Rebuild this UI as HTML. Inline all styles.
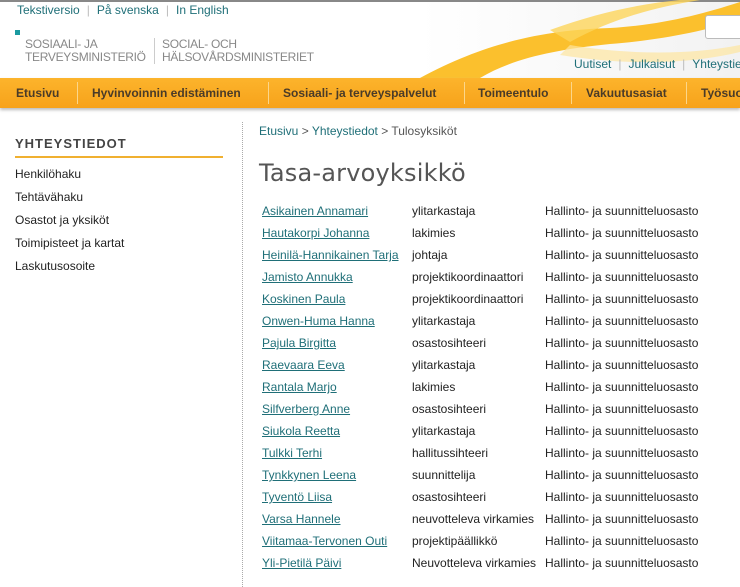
<!DOCTYPE html>
<html><head><meta charset="utf-8"><style>
body{margin:0;width:740px;height:587px;overflow:hidden;background:#fff;font-family:"Liberation Sans",Arial,sans-serif;position:relative}
.a{position:absolute;white-space:nowrap}
.top a{color:#1f6f78;text-decoration:none}
.sep{color:#bbb;margin:0 7px}
.nav{position:absolute;left:0;top:78px;width:740px;height:30px;background:linear-gradient(#fcb42c,#f7a21a);box-shadow:0 2px 3px #bbb}
.nav span{position:absolute;top:8px;font-weight:bold;font-size:12px;color:#4a3b28}
.nav i{position:absolute;top:4px;width:1px;height:22px;background:#fcd68a}
.side{font-size:12px;color:#222}
.r{font-size:12px;position:absolute;white-space:nowrap}
.n{left:262px;color:#1f6f78;text-decoration:underline}
.t{left:412px;color:#222}
.o{left:545px;color:#222}
</style></head><body>
<div class="a" style="left:0;top:0;width:740px;height:2px;background:#888"></div>
<div class="a" style="left:420px;top:2px;width:320px;height:76px;background:linear-gradient(90deg,#fff,#f2f2f2)"></div>
<svg class="a" style="left:400px;top:0" width="340" height="78" viewBox="0 0 340 78">
<path d="M20 78 C90 40 150 30 210 28 C260 25 300 15 340 2 L340 20 C300 32 260 40 210 44 C150 50 110 60 80 78Z" fill="#fbc02d"/>
<path d="M150 30 C200 12 240 4 280 0 L300 0 C250 8 210 20 170 42Z" fill="#fcd45a" opacity=".8"/>
<path d="M170 45 C230 55 290 55 340 45 L340 52 C290 64 230 66 160 55Z" fill="#fde6a0" opacity=".7"/>
</svg>
<div class="a" style="left:705px;top:15px;width:40px;height:22px;border:1px solid #bbb;border-radius:3px;background:#fff"></div>
<div class="a top" style="left:17px;top:3px;font-size:12px"><a>Tekstiversio</a><span class="sep">|</span><a>På svenska</a><span class="sep">|</span><a>In English</a></div>
<div class="a" style="left:15px;top:30px;width:5px;height:5px;background:#1a9aa0"></div>
<div class="a" style="left:25px;top:38px;font-size:12px;color:#888;line-height:13px;letter-spacing:-.3px">SOSIAALI- JA<br>TERVEYSMINISTERIÖ</div>
<div class="a" style="left:154px;top:38px;width:1px;height:26px;background:#ccc"></div>
<div class="a" style="left:162px;top:38px;font-size:12px;color:#888;line-height:13px;letter-spacing:-.3px">SOCIAL- OCH<br>HÄLSOVÅRDSMINISTERIET</div>
<div class="a top" style="left:574px;top:57px;font-size:12px"><a>Uutiset</a><span class="sep">|</span><a>Julkaisut</a><span class="sep">|</span><a>Yhteystiedot</a></div>
<div class="nav">
<span style="left:16px">Etusivu</span><i style="left:77px"></i>
<span style="left:92px">Hyvinvoinnin edistäminen</span><i style="left:268px"></i>
<span style="left:283px">Sosiaali- ja terveyspalvelut</span><i style="left:464px"></i>
<span style="left:478px">Toimeentulo</span><i style="left:571px"></i>
<span style="left:586px">Vakuutusasiat</span><i style="left:686px"></i>
<span style="left:701px">Työsuojelu</span>
</div>
<div class="a" style="left:15px;top:136px;font-size:13px;font-weight:bold;color:#444;letter-spacing:1px">YHTEYSTIEDOT</div>
<div class="a" style="left:15px;top:156px;width:208px;height:2px;background:#f0b030"></div>
<div class="a side" style="left:15px;top:167px">Henkilöhaku</div>
<div class="a side" style="left:15px;top:190px">Tehtävähaku</div>
<div class="a side" style="left:15px;top:213px">Osastot ja yksiköt</div>
<div class="a side" style="left:15px;top:236px">Toimipisteet ja kartat</div>
<div class="a side" style="left:15px;top:259px">Laskutusosoite</div>
<div class="a" style="left:242px;top:122px;height:465px;border-left:1px dotted #aaa"></div>
<div class="a" style="left:259px;top:124px;font-size:12px;color:#555"><span style="color:#1f6f78">Etusivu</span> &gt; <span style="color:#1f6f78">Yhteystiedot</span> &gt; Tulosyksiköt</div>
<div class="a" style="left:259px;top:159px;font-size:24px;color:#555;font-family:'DejaVu Sans',sans-serif;letter-spacing:.2px">Tasa-arvoyksikkö</div>
<div class="r n" style="top:204px">Asikainen Annamari</div><div class="r t" style="top:204px">ylitarkastaja</div><div class="r o" style="top:204px">Hallinto- ja suunnitteluosasto</div>
<div class="r n" style="top:226px">Hautakorpi Johanna</div><div class="r t" style="top:226px">lakimies</div><div class="r o" style="top:226px">Hallinto- ja suunnitteluosasto</div>
<div class="r n" style="top:248px">Heinilä-Hannikainen Tarja</div><div class="r t" style="top:248px">johtaja</div><div class="r o" style="top:248px">Hallinto- ja suunnitteluosasto</div>
<div class="r n" style="top:270px">Jamisto Annukka</div><div class="r t" style="top:270px">projektikoordinaattori</div><div class="r o" style="top:270px">Hallinto- ja suunnitteluosasto</div>
<div class="r n" style="top:292px">Koskinen Paula</div><div class="r t" style="top:292px">projektikoordinaattori</div><div class="r o" style="top:292px">Hallinto- ja suunnitteluosasto</div>
<div class="r n" style="top:314px">Onwen-Huma Hanna</div><div class="r t" style="top:314px">ylitarkastaja</div><div class="r o" style="top:314px">Hallinto- ja suunnitteluosasto</div>
<div class="r n" style="top:336px">Pajula Birgitta</div><div class="r t" style="top:336px">osastosihteeri</div><div class="r o" style="top:336px">Hallinto- ja suunnitteluosasto</div>
<div class="r n" style="top:358px">Raevaara Eeva</div><div class="r t" style="top:358px">ylitarkastaja</div><div class="r o" style="top:358px">Hallinto- ja suunnitteluosasto</div>
<div class="r n" style="top:380px">Rantala Marjo</div><div class="r t" style="top:380px">lakimies</div><div class="r o" style="top:380px">Hallinto- ja suunnitteluosasto</div>
<div class="r n" style="top:402px">Silfverberg Anne</div><div class="r t" style="top:402px">osastosihteeri</div><div class="r o" style="top:402px">Hallinto- ja suunnitteluosasto</div>
<div class="r n" style="top:424px">Siukola Reetta</div><div class="r t" style="top:424px">ylitarkastaja</div><div class="r o" style="top:424px">Hallinto- ja suunnitteluosasto</div>
<div class="r n" style="top:446px">Tulkki Terhi</div><div class="r t" style="top:446px">hallitussihteeri</div><div class="r o" style="top:446px">Hallinto- ja suunnitteluosasto</div>
<div class="r n" style="top:468px">Tynkkynen Leena</div><div class="r t" style="top:468px">suunnittelija</div><div class="r o" style="top:468px">Hallinto- ja suunnitteluosasto</div>
<div class="r n" style="top:490px">Tyventö Liisa</div><div class="r t" style="top:490px">osastosihteeri</div><div class="r o" style="top:490px">Hallinto- ja suunnitteluosasto</div>
<div class="r n" style="top:512px">Varsa Hannele</div><div class="r t" style="top:512px">neuvotteleva virkamies</div><div class="r o" style="top:512px">Hallinto- ja suunnitteluosasto</div>
<div class="r n" style="top:534px">Viitamaa-Tervonen Outi</div><div class="r t" style="top:534px">projektipäällikkö</div><div class="r o" style="top:534px">Hallinto- ja suunnitteluosasto</div>
<div class="r n" style="top:556px">Yli-Pietilä Päivi</div><div class="r t" style="top:556px">Neuvotteleva virkamies</div><div class="r o" style="top:556px">Hallinto- ja suunnitteluosasto</div>
</body></html>
